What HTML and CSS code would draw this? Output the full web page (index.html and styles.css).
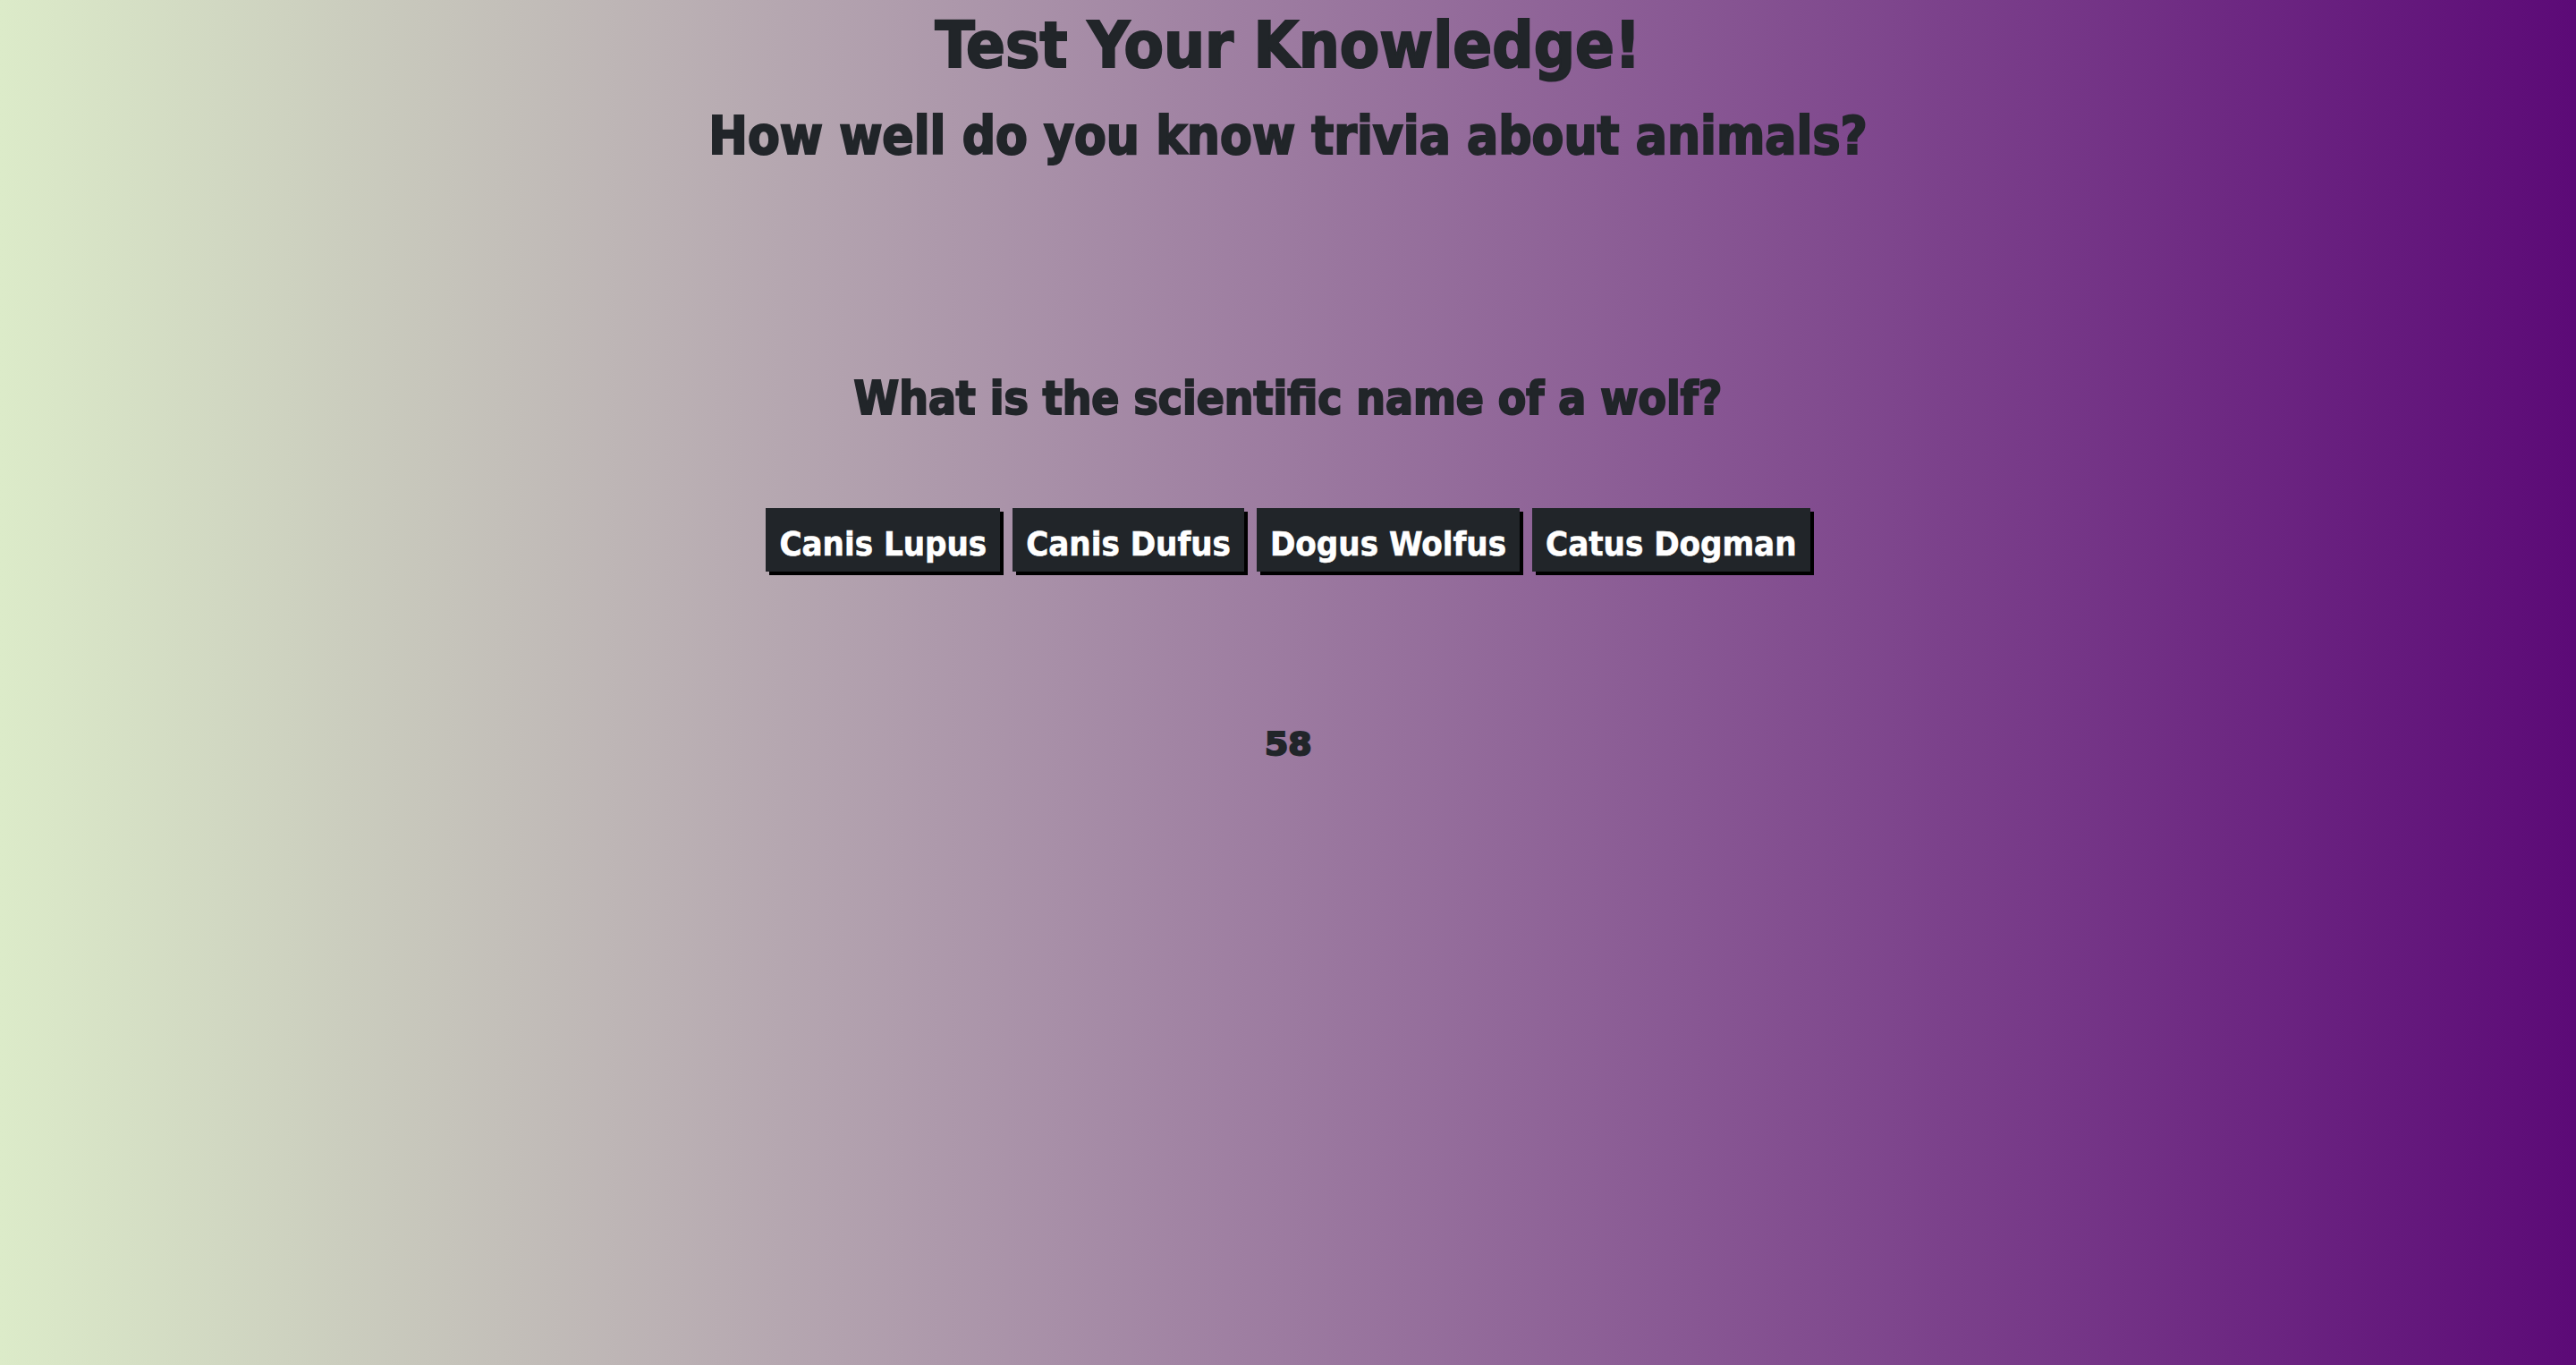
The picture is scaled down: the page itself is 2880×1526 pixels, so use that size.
FILE: index.html
```html
<!DOCTYPE html>
<html lang="en">
<head>
<meta charset="utf-8">
<title>Test Your Knowledge!</title>
<link rel="stylesheet" href="styles.css">
</head>
<body>
<main class="quiz">
  <h1 class="title">Test Your Knowledge!</h1>
  <h2 class="subtitle">How well do you know trivia about animals?</h2>
  <h3 class="question">What is the scientific name of a wolf?</h3>
  <div class="answers">
    <button class="answer">Canis Lupus</button>
    <button class="answer">Canis Dufus</button>
    <button class="answer">Dogus Wolfus</button>
    <button class="answer">Catus Dogman</button>
  </div>
  <div class="timer"><span class="timer-value">58</span></div>
</main>
</body>
</html>
```
FILE: styles.css
```css
html, body {
  margin: 0;
  padding: 0;
  height: 100%;
}
body {
  background: linear-gradient(to right, #dcebc9 0%, #5c0a77 100%);
  font-family: "DejaVu Sans Condensed", "DejaVu Sans", sans-serif;
  font-weight: bold;
  color: #212529;
}
.quiz {
  text-align: center;
  padding-top: 7px;
}
.title,
.subtitle,
.question {
  margin: 0;
  font-weight: bold;
  -webkit-text-stroke: 2px #212529;
}
.title {
  font-size: 72px;
  line-height: 86px;
}
.subtitle {
  margin-top: 24px;
  font-size: 58px;
  line-height: 70px;
}
.question {
  margin-top: 229px;
  font-size: 51px;
  line-height: 60px;
}
.answers {
  margin-top: 92px;
  display: flex;
  justify-content: center;
  gap: 14px;
}
.answer {
  font-family: "DejaVu Sans Condensed", "DejaVu Sans", sans-serif;
  font-weight: bold;
  font-size: 38px;
  line-height: 48px;
  padding: 16px 15px 7px;
  color: #ffffff;
  -webkit-text-stroke: 0.6px #ffffff;
  background: #212529;
  border: none;
  border-radius: 0;
  box-shadow: 4px 4px 0 #000000;
  margin: 0;
}
.timer {
  margin-top: 172px;
  font-family: "DejaVu Sans", sans-serif;
  font-size: 35px;
  line-height: 42px;
  font-weight: bold;
  -webkit-text-stroke: 2px #212529;
}
.timer-value {
  display: inline-block;
  transform: scaleX(1.08);
}
```
